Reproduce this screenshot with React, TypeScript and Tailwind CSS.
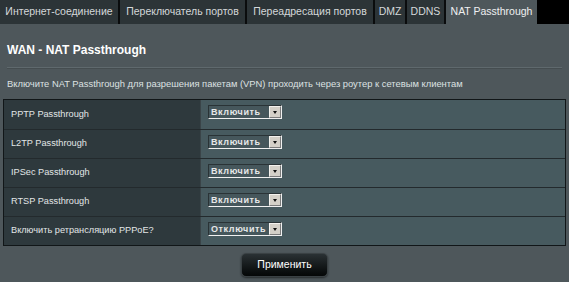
import React from 'react'

const tabs = [
  { label: 'Интернет-соединение', w: 'w-[118px]' },
  { label: 'Переключатель портов', w: 'w-[125px]' },
  { label: 'Переадресация портов', w: 'w-[126px]' },
  { label: 'DMZ', w: 'w-[30px]' },
  { label: 'DDNS', w: 'w-[37px]' },
]

const rows = [
  { label: 'PPTP Passthrough', value: 'Включить' },
  { label: 'L2TP Passthrough', value: 'Включить' },
  { label: 'IPSec Passthrough', value: 'Включить' },
  { label: 'RTSP Passthrough', value: 'Включить' },
  { label: 'Включить ретрансляцию PPPoE?', value: 'Отключить' },
]

function Select({ value }: { value: string }) {
  return (
    <div className="flex h-[14px] w-[74px] items-stretch border-t border-l border-t-[#2a3336] border-l-[#2a3336] border-b border-r border-b-[#f0f0f0] border-r-[#f0f0f0] bg-[#46575c]">
      <div className="flex-1 whitespace-nowrap pl-[2px] text-[9px] font-bold leading-[12px] tracking-[0.6px] text-[#e6e8e8]">
        {value}
      </div>
      <div className="flex w-[12px] items-center justify-center border border-[#f4f2ee] border-r-[#7a7a7a] border-b-[#7a7a7a] bg-[#d4d0c8]">
        <div className="h-0 w-0 border-x-[2.5px] border-t-[3px] border-x-transparent border-t-[#111]" />
      </div>
    </div>
  )
}

export default function App() {
  return (
    <div className="h-[282px] w-[569px] bg-[#4e575b] font-['Liberation_Sans',Arial,sans-serif]">
      <div className="flex h-[24px] bg-[#2c3437]">
        {tabs.map((t, i) => (
          <div key={i} className="flex">
            <div className={`${t.w} flex items-center justify-center whitespace-nowrap text-[10.5px] text-[#d4d8da]`}>{t.label}</div>
            <div className="w-[2px] bg-[#0a0c0d]" />
          </div>
        ))}
        <div className="flex w-[91px] items-center justify-center whitespace-nowrap bg-[#4e575b] text-[10.5px] text-[#eef0f1]">
          NAT Passthrough
        </div>
        <div className="flex-1 bg-black" />
      </div>

      <div className="px-[7px]">
        <h1 className="pt-[19px] text-[12px] font-bold leading-[14px] text-white">WAN - NAT Passthrough</h1>
        <div className="mt-[10px] h-px bg-[#5f696d] shadow-[0_1px_0_#454d50]" />
        <p className="mt-[10px] text-[9.4px] leading-[11px] text-[#dde1e2]">
          Включите NAT Passthrough для разрешения пакетам (VPN) проходить через роутер к сетевым клиентам
        </p>
      </div>

      <div className="mx-[3px] mt-[10px] w-[563px] border border-[#111618]">
        {rows.map((r, i) => (
          <div
            key={i}
            className={`flex h-[29px] ${i > 0 ? 'border-t border-[#232a2d]' : ''}`}
          >
            <div className="flex w-[196px] items-center bg-[#2e393d] pl-[7px] text-[9.2px] text-[#e2e6e7]">
              {r.label}
            </div>
            <div className="flex flex-1 items-start border-l border-[#3a4448] bg-[#475a5f] pl-[7px] pt-[5px]">
              <Select value={r.value} />
            </div>
          </div>
        ))}
      </div>

      <div className="mt-[7px] flex justify-center">
        <button className="h-[24px] w-[87px] rounded-[5px] border border-[#3a4144] bg-gradient-to-b from-[#2a3134] to-[#050707] text-[10.5px] text-white shadow-[0_1px_2px_rgba(0,0,0,0.5)]">
          Применить
        </button>
      </div>
    </div>
  )
}
